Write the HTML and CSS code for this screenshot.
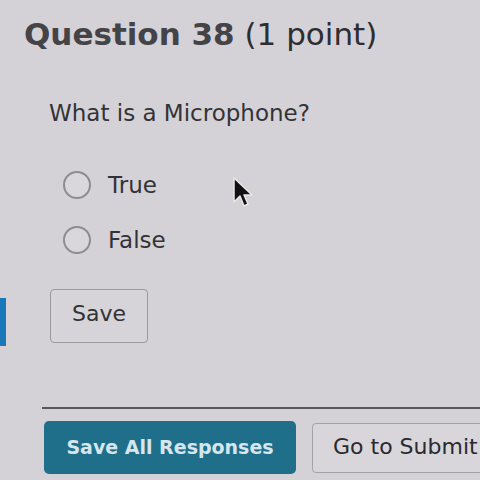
FILE: index.html
```html
<!DOCTYPE html>
<html>
<head>
<meta charset="utf-8">
<link rel="stylesheet" href="styles.css">
</head>
<body>
<div class="page">
  <h1 class="title"><strong>Question 38</strong> (1 point)</h1>
  <p class="question">What is a Microphone?</p>
  <div class="options">
    <label class="option"><span class="radio"></span><span>True</span></label>
    <label class="option"><span class="radio"></span><span>False</span></label>
  </div>
  <div class="save-row">
    <span class="marker"></span>
    <button class="btn-save">Save</button>
  </div>
  <div class="footer">
    <hr class="divider">
    <div class="actions">
      <button class="btn-primary">Save All Responses</button>
      <button class="btn-secondary">Go to Submit</button>
    </div>
  </div>
  <svg class="cursor" width="24" height="34" viewBox="0 0 24 34">
    <path d="M2 2 L2 26 L8 20 L12 30 L16 28 L12 19 L20 19 Z" fill="#111" stroke="#e8e8e8" stroke-width="1.5" stroke-linejoin="round"/>
  </svg>
</div>
</body>
</html>
```
FILE: styles.css
```css
html, body {
  margin: 0;
  padding: 0;
}
body {
  background: #d4d2d6;
  font-family: "DejaVu Sans", Verdana, sans-serif;
  color: #333236;
}
.page {
  position: relative;
  width: 480px;
  height: 480px;
  overflow: hidden;
  display: flex;
  flex-direction: column;
}
.title {
  margin: 0;
  padding: 16px 0 0 24px;
  font-size: 31px;
  line-height: 37px;
  font-weight: normal;
  color: #2e2d31;
  white-space: nowrap;
}
.title strong {
  font-weight: bold;
  color: #444347;
}
.question {
  margin: 46px 0 0 49px;
  font-size: 23px;
  line-height: 28px;
}
.options {
  margin: 44px 0 0 63px;
  display: flex;
  flex-direction: column;
  gap: 27px;
}
.option {
  display: flex;
  align-items: center;
  gap: 17px;
  font-size: 23px;
  line-height: 28px;
}
.radio {
  width: 24px;
  height: 24px;
  border: 2px solid #8d8c90;
  border-radius: 50%;
  background: #d9d7db;
}
.save-row {
  margin-top: 32px;
  display: flex;
  align-items: center;
}
.marker {
  width: 6px;
  height: 48px;
  background: #1b78b8;
  margin-top: 12px;
}
.btn-save {
  margin-left: 44px;
  width: 98px;
  height: 54px;
  border: 1px solid #9c9a9f;
  border-radius: 4px;
  background: #d6d4d8;
  font-family: inherit;
  font-size: 22px;
  line-height: 28px;
  color: #333236;
  padding: 0 0 4px 0;
}
.footer {
  margin-top: 61px;
  padding-left: 42px;
}
.divider {
  margin: 0;
  border: 0;
  height: 2px;
  background: #59585c;
}
.actions {
  margin-top: 12px;
  display: flex;
  align-items: center;
  gap: 16px;
  padding-left: 2px;
}
.btn-primary {
  flex: none;
  width: 252px;
  height: 53px;
  border: 0;
  border-radius: 5px;
  background: #1f6f8b;
  color: #d6e6ec;
  font-family: inherit;
  font-weight: bold;
  font-size: 19px;
  padding: 0 0 2px 0;
}
.btn-secondary {
  flex: none;
  width: 200px;
  height: 50px;
  border: 1px solid #a4a2a7;
  border-radius: 4px;
  background: #d8d6da;
  color: #2a292d;
  font-family: inherit;
  font-size: 22px;
  text-align: left;
  padding: 0 0 2px 20px;
}
.cursor {
  position: absolute;
  left: 232px;
  top: 176px;
}
```
